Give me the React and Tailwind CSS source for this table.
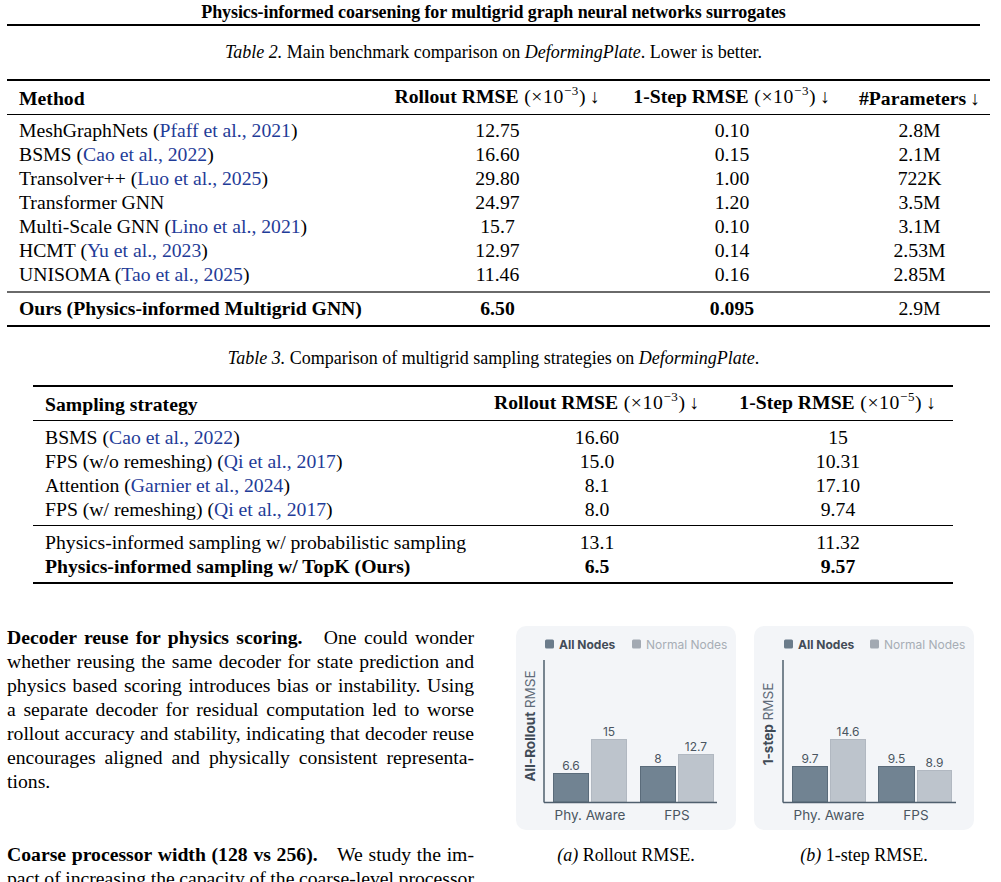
import React from "react";

const Cite = ({ children }) => (
  <>
    (<span className="text-[#1f3c98]">{children}</span>)
  </>
);

const Exp = ({ e }) => (
  <span className="font-normal tracking-[0.6px]">
    {" "}(×10<span className="relative top-[-8px] text-[13px]">−{e}</span>)<span className="ml-[4px]">↓</span>
  </span>
);

const t2rows = [
  ["MeshGraphNets", "Pfaff et al., 2021", "12.75", "0.10", "2.8M"],
  ["BSMS", "Cao et al., 2022", "16.60", "0.15", "2.1M"],
  ["Transolver++", "Luo et al., 2025", "29.80", "1.00", "722K"],
  ["Transformer GNN", null, "24.97", "1.20", "3.5M"],
  ["Multi-Scale GNN", "Lino et al., 2021", "15.7", "0.10", "3.1M"],
  ["HCMT", "Yu et al., 2023", "12.97", "0.14", "2.53M"],
  ["UNISOMA", "Tao et al., 2025", "11.46", "0.16", "2.85M"],
];

const t3rows = [
  ["BSMS", "Cao et al., 2022", "16.60", "15"],
  ["FPS (w/o remeshing)", "Qi et al., 2017", "15.0", "10.31"],
  ["Attention", "Garnier et al., 2024", "8.1", "17.10"],
  ["FPS (w/ remeshing)", "Qi et al., 2017", "8.0", "9.74"],
];

function Chart({ cfg }) {
  const { axisX, axisEnd, legDark, legLight, bars, xl, yl, yBold } = cfg;
  return (
    <div className="w-[220px] h-[204px] rounded-[10px] bg-[#f3f5f8]">
      <svg width="220" height="204" viewBox="0 0 220 204" fontFamily="Inter, 'Noto Sans', sans-serif">
        <rect x={legDark} y="13.5" width="9" height="9" rx="1.5" fill="#6b7c8b" />
        <text x={legDark + 14} y="22.5" fontSize="12" fontWeight="700" fill="#434c57">All Nodes</text>
        <rect x={legLight} y="13.5" width="9" height="9" rx="1.5" fill="#a2a9b2" />
        <text x={legLight + 14} y="22.5" fontSize="12" fill="#a7adb5">Normal Nodes</text>
        {bars.map((b, i) => (
          <g key={i}>
            <rect
              x={b.x + 0.5}
              y={b.top + 0.5}
              width={b.w - 1}
              height={176 - b.top - 0.5}
              fill={b.dark ? "#718392" : "#bdc4cc"}
              stroke={b.dark ? "#5a6b7a" : "#b1b8c1"}
              strokeWidth="1"
            />
            <text x={b.x + b.w / 2} y={b.top - 3} fontSize="12" textAnchor="middle" fill="#4a5561">
              {b.label}
            </text>
          </g>
        ))}
        <line x1={axisX} y1="34" x2={axisX} y2="176.5" stroke="#4f5f6e" strokeWidth="1.5" />
        <line x1={axisX} y1="176.5" x2={axisEnd} y2="176.5" stroke="#4f5f6e" strokeWidth="1.5" />
        <text x={xl[0]} y="194" fontSize="13.5" textAnchor="middle" fill="#4a5561">Phy. Aware</text>
        <text x={xl[1]} y="194" fontSize="13.5" textAnchor="middle" fill="#4a5561">FPS</text>
        <text
          transform={`translate(19 ${yl}) rotate(-90)`}
          fontSize="13.5"
          textAnchor="middle"
        >
          <tspan fontWeight="700" fill="#3f4a56">{yBold}</tspan>
          <tspan fill="#5f6b78"> RMSE</tspan>
        </text>
      </svg>
    </div>
  );
}

const chartA = {
  axisX: 28,
  axisEnd: 201,
  legDark: 29,
  legLight: 116,
  yBold: "All-Rollout",
  yl: 100,
  xl: [74, 161],
  bars: [
    { x: 37, w: 36, top: 147, dark: true, label: "6.6" },
    { x: 75, w: 36, top: 113, dark: false, label: "15" },
    { x: 124, w: 36, top: 140, dark: true, label: "8" },
    { x: 162, w: 36, top: 128, dark: false, label: "12.7" },
  ],
};

const chartB = {
  axisX: 29,
  axisEnd: 202,
  legDark: 30,
  legLight: 116,
  yBold: "1-step",
  yl: 98,
  xl: [75, 162],
  bars: [
    { x: 38, w: 36, top: 140, dark: true, label: "9.7" },
    { x: 76, w: 36, top: 113, dark: false, label: "14.6" },
    { x: 124, w: 37, top: 140, dark: true, label: "9.5" },
    { x: 163, w: 35, top: 144, dark: false, label: "8.9" },
  ],
};

const J = ({ children, tight }) => (
  <div
    className={
      tight
        ? "h-[24px] whitespace-nowrap text-justify [text-align-last:justify] [word-spacing:-2px]"
        : "h-[24px] text-justify [text-align-last:justify]"
    }
  >
    {children}
  </div>
);

export default function App() {
  return (
    <div className="w-[1001px] min-h-[882px] bg-white text-black font-['Liberation_Serif',serif]">
      {/* running title */}
      <div className="ml-[7px] w-[973px]">
        <div className="h-[24px] pt-[2px] leading-[20px] text-center text-[18px] font-bold tracking-[-0.1px]">
          Physics-informed coarsening for multigrid graph neural networks surrogates
        </div>
        <div className="h-[2px] bg-black" />
        <div className="mt-[16px] h-[20px] leading-[20px] text-center text-[18px]">
          <i>Table 2.</i> Main benchmark comparison on <i>DeformingPlate</i>. Lower is better.
        </div>
      </div>

      {/* Table 2 */}
      <div className="ml-[7px] mt-[17px] w-[983px] text-[19.7px]">
        <div className="h-[2px] bg-black" />
        <div className="grid h-[33px] grid-cols-[373px_235px_234px_141px] items-center leading-[24px] font-bold">
          <div className="pl-[12px]">Method</div>
          <div className="text-center whitespace-nowrap">
            Rollout RMSE<Exp e="3" />
          </div>
          <div className="text-center whitespace-nowrap">
            1-Step RMSE<Exp e="3" />
          </div>
          <div className="text-center whitespace-nowrap">
            #Parameters<span className="ml-[4px] font-normal">↓</span>
          </div>
        </div>
        <div className="h-[1px] bg-black" />
        <div className="pt-[3px]">
          {t2rows.map((r) => (
            <div key={r[0]} className="grid h-[24px] grid-cols-[373px_235px_234px_141px] leading-[24px]">
              <div className="pl-[12px] whitespace-nowrap">
                {r[0]}
                {r[1] && (
                  <>
                    {" "}
                    <Cite>{r[1]}</Cite>
                  </>
                )}
              </div>
              <div className="text-center">{r[2]}</div>
              <div className="text-center">{r[3]}</div>
              <div className="text-center">{r[4]}</div>
            </div>
          ))}
        </div>
        <div className="mt-[5px] h-[2px] bg-[#6a6a6a]" />
        <div className="pt-[3px]">
          <div className="grid h-[24px] grid-cols-[373px_235px_234px_141px] leading-[24px]">
            <div className="pl-[12px] font-bold whitespace-nowrap">Ours (Physics-informed Multigrid GNN)</div>
            <div className="text-center font-bold">6.50</div>
            <div className="text-center font-bold">0.095</div>
            <div className="text-center">2.9M</div>
          </div>
        </div>
        <div className="mt-[5px] h-[2px] bg-black" />
      </div>

      {/* Table 3 caption */}
      <div className="ml-[7px] mt-[21px] w-[973px] h-[20px] leading-[20px] text-center text-[18px]">
        <i>Table 3.</i> Comparison of multigrid sampling strategies on <i>DeformingPlate</i>.
      </div>

      {/* Table 3 */}
      <div className="ml-[33px] mt-[17px] w-[920px] text-[19.7px]">
        <div className="h-[2px] bg-black" />
        <div className="grid h-[33px] grid-cols-[451px_226px_243px] items-center leading-[24px] font-bold">
          <div className="pl-[12px]">Sampling strategy</div>
          <div className="text-center whitespace-nowrap">
            Rollout RMSE<Exp e="3" />
          </div>
          <div className="pl-[13px] text-center whitespace-nowrap">
            1-Step RMSE<Exp e="5" />
          </div>
        </div>
        <div className="h-[1px] bg-black" />
        <div className="pt-[4px]">
          {t3rows.map((r, i) => (
            <div key={i} className="grid h-[24px] grid-cols-[451px_226px_243px] leading-[24px]">
              <div className="pl-[12px] whitespace-nowrap">
                {r[0]} <Cite>{r[1]}</Cite>
              </div>
              <div className="text-center">{r[2]}</div>
              <div className="pl-[13px] text-center">{r[3]}</div>
            </div>
          ))}
        </div>
        <div className="mt-[4px] h-[1px] bg-black" />
        <div className="pt-[4px]">
          <div className="grid h-[24px] grid-cols-[451px_226px_243px] leading-[24px]">
            <div className="pl-[12px] whitespace-nowrap">Physics-informed sampling w/ probabilistic sampling</div>
            <div className="text-center">13.1</div>
            <div className="pl-[13px] text-center">11.32</div>
          </div>
          <div className="grid h-[24px] grid-cols-[451px_226px_243px] leading-[24px] font-bold">
            <div className="pl-[12px] whitespace-nowrap">Physics-informed sampling w/ TopK (Ours)</div>
            <div className="text-center">6.5</div>
            <div className="pl-[13px] text-center">9.57</div>
          </div>
        </div>
        <div className="mt-[4px] h-[2px] bg-black" />
      </div>

      {/* bottom section */}
      <div className="mt-[41px] flex">
        <div className="ml-[7px] w-[467px] text-[19.7px] leading-[24px]">
          <J>
            <b>Decoder reuse for physics scoring.</b>
            <span className="inline-block w-[14px]" /> One could wonder
          </J>
          <J>whether reusing the same decoder for state prediction and</J>
          <J>physics based scoring introduces bias or instability. Using</J>
          <J>a separate decoder for residual computation led to worse</J>
          <J>rollout accuracy and stability, indicating that decoder reuse</J>
          <J>encourages aligned and physically consistent representa-</J>
          <div className="h-[24px]">tions.</div>
          <div className="mt-[49px]">
            <J>
              <b>Coarse processor width (128 vs 256).</b>
              <span className="inline-block w-[14px]" /> We study the im-
            </J>
            <J tight>pact of increasing the capacity of the coarse-level processor</J>
          </div>
        </div>
        <div className="ml-[42px] mt-[1px] flex gap-[18px]">
          <div className="flex flex-col items-center">
            <Chart cfg={chartA} />
            <div className="mt-[15px] h-[20px] leading-[20px] text-[18px]">
              <i>(a)</i> Rollout RMSE.
            </div>
          </div>
          <div className="flex flex-col items-center">
            <Chart cfg={chartB} />
            <div className="mt-[15px] h-[20px] leading-[20px] text-[18px]">
              <i>(b)</i> 1-step RMSE.
            </div>
          </div>
        </div>
      </div>
    </div>
  );
}
